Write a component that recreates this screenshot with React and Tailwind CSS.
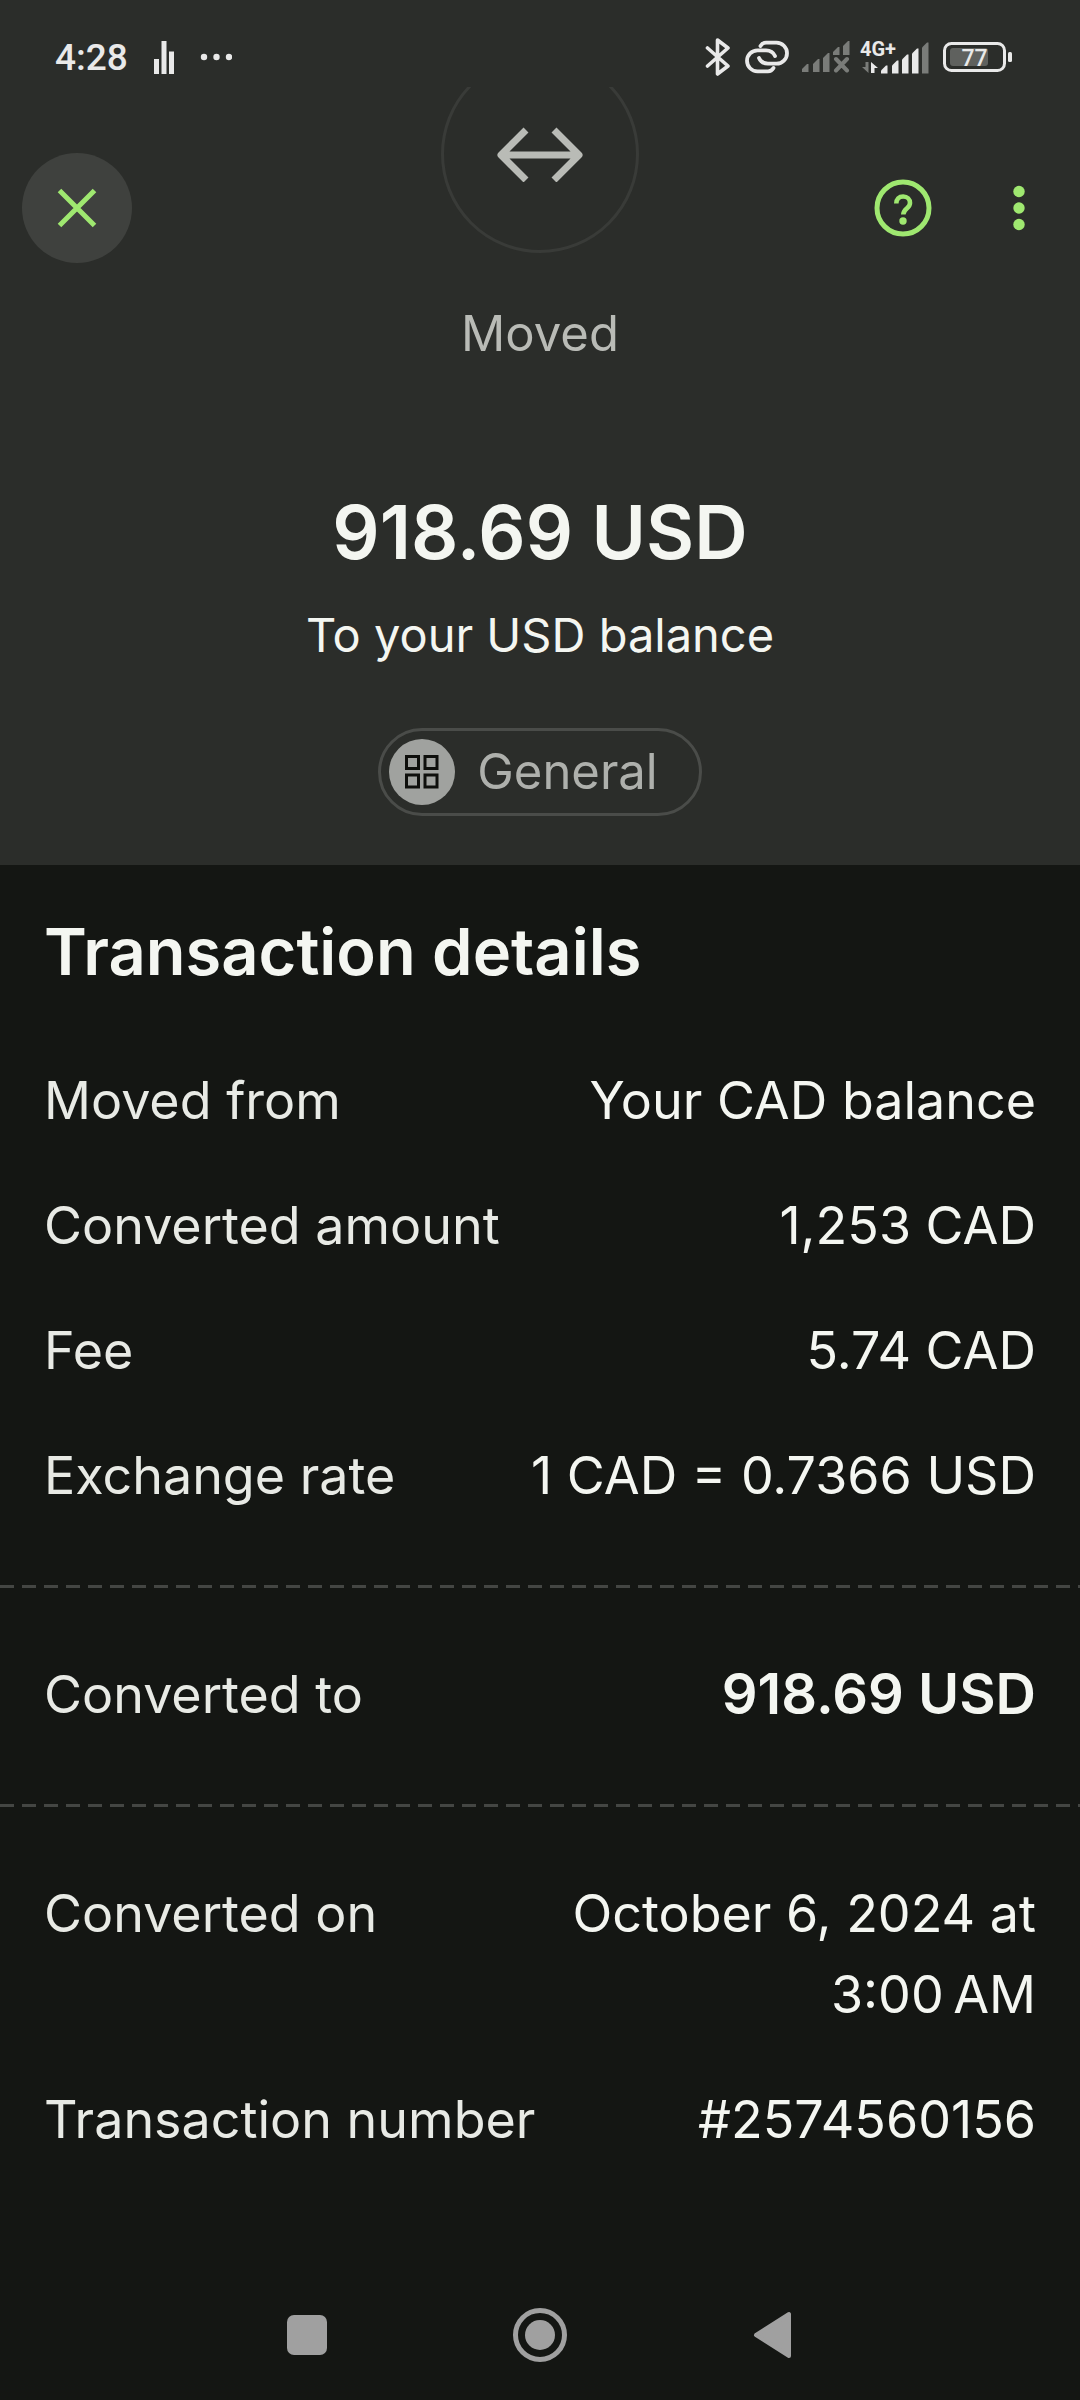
const CONVERSION = [
  { label: "Moved from", value: "Your CAD balance" },
  { label: "Converted amount", value: "1,253 CAD" },
  { label: "Fee", value: "5.74 CAD" },
  { label: "Exchange rate", value: "1 CAD = 0.7366 USD" },
];

const TOTAL = [{ label: "Converted to", value: "918.69 USD", strong: true }];

// narrow no-break space keeps the time on one line
const META = [
  { label: "Converted on", value: "October 6, 2024 at 3:00\u202fAM" },
  { label: "Transaction number", value: "#2574560156" },
];

function SignalBars({ muted }) {
  // left edge and top of each bar, low to high
  const bars = [
    [0, 23],
    [11, 18],
    [21, 12],
    [31, 6],
    [41, 0],
  ];
  return bars.map(([x, y], i) => {
    const dim = muted || i === 4;
    const bottom = muted && i > 2 ? 14 : 31;
    return (
      <path
        key={x}
        d={`M${x} ${y + 5} L${x + 5} ${y} H${x + 6.5} V${bottom} H${x} Z`}
        fill={dim ? "#7a7c79" : "#e9e9e9"}
      />
    );
  });
}

function StatusBar() {
  return (
    <div className="flex h-[87px] items-center justify-between pt-[29px] pl-[55px] pr-[67px] font-['Roboto',sans-serif] text-[#e9e9e9]">
      <div className="flex items-center">
        <span className="text-[37px] leading-[44px] font-medium">4:28</span>
        <svg className="ml-[25px] h-[34px] w-[22px]" viewBox="0 0 22 34" fill="currentColor" aria-hidden="true">
          <rect x="1" y="18" width="5" height="15" />
          <rect x="8.5" y="0" width="5" height="33" />
          <rect x="16" y="10.500" width="5" height="22.500" />
        </svg>
        <svg className="ml-[25px] h-[34px] w-[32px]" viewBox="0 0 32 34" fill="currentColor" aria-hidden="true">
          <circle cx="4" cy="16" r="3.2" />
          <circle cx="16.500" cy="16" r="3.2" />
          <circle cx="29" cy="16" r="3.2" />
        </svg>
      </div>

      <div className="flex items-center pb-[2px]">
        <svg className="h-[40px] w-[26px]" viewBox="0 0 26 40" fill="none" stroke="currentColor" strokeWidth="3.6" strokeLinecap="round" strokeLinejoin="round" aria-label="Bluetooth">
          <path d="M2.500 11 L23 29 L12.500 37 V3 L23 11 L2.500 29" />
        </svg>
        <svg className="ml-[14px] h-[34px] w-[44px]" viewBox="0 0 44 34" fill="none" stroke="currentColor" strokeWidth="3.8" strokeLinecap="round" aria-label="Linked">
          <path d="M15.500 6 C17 3.500 19 2.700 21 2.700 H31.500 A10.500 10.500 0 0 1 31.500 23.700 H23 C18.500 23.700 15.500 21.500 14 18" />
          <path d="M28.500 28 C27 30.500 25 31.300 23 31.300 H12.500 A10.500 10.500 0 0 1 12.500 10.300 H21 C25.500 10.300 28.500 12.500 30 16" />
        </svg>
        <svg className="ml-[13px] h-[32px] w-[48px]" viewBox="0 0 48 32" aria-label="No signal">
          <SignalBars muted />
          <path d="M34 18 L45 29.500 M45 18 L34 29.500" stroke="#7a7c79" strokeWidth="4" strokeLinecap="round" />
        </svg>
        <svg className="ml-[8px] h-[45px] w-[72px]" viewBox="-2 -6 72 45" aria-label="4G+ signal">
          <g transform="translate(21 1.500)">
            <SignalBars />
          </g>
          <rect x="0" y="0" width="39" height="16" fill="#2b2d2a" />
          <text x="0" y="15" fontSize="20" fontWeight="700" fill="#e9e9e9">4G+</text>
          <path d="M8.500 21 V32 L2 26 H5.500 V21 Z" fill="#7a7c79" />
          <path d="M11 32 V21 L18 27 H14.500 V32 Z" fill="#e9e9e9" />
        </svg>
        <svg className="ml-[12px] h-[32px] w-[71px]" viewBox="0 0 71 32" aria-label="Battery 77 percent">
          <rect x="2.500" y="2.500" width="60" height="27" rx="7" fill="none" stroke="#e9e9e9" strokeWidth="3" />
          <rect x="8" y="7" width="38" height="18" rx="3" fill="#5f615e" />
          <rect x="66" y="11" width="4" height="10" rx="1.500" fill="#e9e9e9" />
          <text x="32.500" y="24.500" textAnchor="middle" fontSize="23" fontWeight="500" fill="#e9e9e9">77</text>
        </svg>
      </div>
    </div>
  );
}

function AppBar() {
  return (
    <div className="absolute inset-x-0 top-[66px] flex items-center justify-between pl-[22px] pr-[26px] text-[#9fe870]">
      <button type="button" aria-label="Close" className="flex size-[110px] items-center justify-center rounded-full bg-[#3f413e]">
        <svg className="size-[40px]" viewBox="0 0 40 40" stroke="currentColor" strokeWidth="5">
          <path d="M2.500 2.500 L37.500 37.500 M37.500 2.500 L2.500 37.500" />
        </svg>
      </button>
      <div className="flex items-center gap-[46px]">
        <button type="button" aria-label="Help" className="flex size-[70px] items-center justify-center">
          <svg className="size-[58px]" viewBox="0 0 58 58" fill="none" stroke="currentColor" strokeWidth="5">
            <circle cx="29" cy="29" r="26" />
            <path d="M22.300 24.500 C22.300 20 25 17.500 29.200 17.500 C33.300 17.500 36 20.300 36 24 C36 29.500 29.300 29.500 29.300 35.500" strokeWidth="4.6" />
            <circle cx="29" cy="42" r="3.7" fill="currentColor" stroke="none" />
          </svg>
        </button>
        <button type="button" aria-label="More options" className="flex size-[70px] items-center justify-center">
          <svg className="h-[46px] w-[12px]" viewBox="0 0 12 46" fill="currentColor">
            <circle cx="6" cy="6.500" r="5.7" />
            <circle cx="6" cy="23" r="5.7" />
            <circle cx="6" cy="39.500" r="5.7" />
          </svg>
        </button>
      </div>
    </div>
  );
}

function Divider() {
  return (
    <div className="h-[3px] bg-[repeating-linear-gradient(to_right,#444643_0_14px,transparent_14px_22px)]" />
  );
}

function DetailList({ rows }) {
  return (
    <dl className="flex flex-col gap-11 px-11 text-[52px] leading-[81px]">
      {rows.map(({ label, value, strong }) => (
        <div key={label} className="flex items-start justify-between gap-11">
          <dt className="shrink-0 text-[#e8eae5]">{label}</dt>
          <dd className={strong ? "text-right text-[56px] font-semibold" : "text-right"}>{value}</dd>
        </div>
      ))}
    </dl>
  );
}

function NavBar() {
  return (
    <nav className="mt-auto flex h-[130px] items-center justify-center text-[#a0a0a0]">
      <button type="button" aria-label="Recent apps" className="flex w-[233px] justify-center">
        <svg className="size-[56px]" viewBox="0 0 56 56" fill="currentColor">
          <rect x="8" y="8" width="40" height="40" rx="7" />
        </svg>
      </button>
      <button type="button" aria-label="Home" className="flex w-[233px] justify-center">
        <svg className="size-[56px]" viewBox="0 0 56 56">
          <circle cx="28" cy="28" r="24.500" fill="none" stroke="currentColor" strokeWidth="5" />
          <circle cx="28" cy="28" r="15" fill="currentColor" />
        </svg>
      </button>
      <button type="button" aria-label="Back" className="flex w-[233px] justify-center">
        <svg className="size-[56px]" viewBox="0 0 56 56" fill="currentColor" stroke="currentColor" strokeWidth="4" strokeLinejoin="round">
          <path d="M11 28 L44 7 V49 Z" />
        </svg>
      </button>
    </nav>
  );
}

export default function App() {
  return (
    <div className="flex min-h-screen flex-col bg-[#141613] font-['Inter',sans-serif] text-[#f4f6f1]">
      <header className="bg-[#2b2d2a]">
        <StatusBar />
        {/* the scrolled avatar is cut off by the status bar */}
        <div className="relative flex flex-col items-center overflow-hidden pb-[49px]">
          <div className="-mt-8 flex size-[198px] items-center justify-center rounded-full border-3 border-[#393b38]">
            <svg className="h-[56px] w-[86px]" viewBox="0 0 86 56" fill="none" stroke="#b9bbb6" strokeWidth="7" strokeLinejoin="round" aria-hidden="true">
              <path d="M4.500 29 H81.500 M29 4 L4 29 L29 54 M57 4 L82 29 L57 54" />
            </svg>
          </div>
          <p className="mt-[49px] text-[49px] leading-[64px] text-[#b9bbb6]">Moved</p>
          <h1 className="mt-[118px] text-[74px] leading-[96px] font-semibold">918.69 USD</h1>
          <p className="mt-[23px] text-[47px] leading-[64px]">To your USD balance</p>
          <button type="button" className="mt-[61px] flex h-[88px] items-center rounded-full border-3 border-[#4a4c49] pr-[41px] pl-2 text-[49px] leading-[64px] text-[#aeb0ac]">
            <span className="flex size-[66px] items-center justify-center rounded-full bg-[#a0a29f]">
              <svg className="size-[34px]" viewBox="0 0 34 34" fill="none" stroke="#0e0f0c" strokeWidth="3" aria-hidden="true">
                <rect x="1.500" y="1.500" width="12" height="12" />
                <rect x="20" y="1.500" width="12" height="12" />
                <rect x="1.500" y="20" width="12" height="12" />
                <rect x="20" y="20" width="12" height="12" />
              </svg>
            </span>
            <span className="ml-[22px]">General</span>
          </button>
          <AppBar />
        </div>
      </header>

      <main>
        <section className="pt-[47px] pb-[69px]">
          <h2 className="mb-[68px] px-11 text-[65px] leading-[80px] font-semibold">Transaction details</h2>
          <DetailList rows={CONVERSION} />
        </section>
        <Divider />
        <section className="pt-[66px] pb-[69px]">
          <DetailList rows={TOTAL} />
        </section>
        <Divider />
        <section className="pt-[66px] pb-[69px]">
          <DetailList rows={META} />
        </section>
      </main>

      <NavBar />
    </div>
  );
}
